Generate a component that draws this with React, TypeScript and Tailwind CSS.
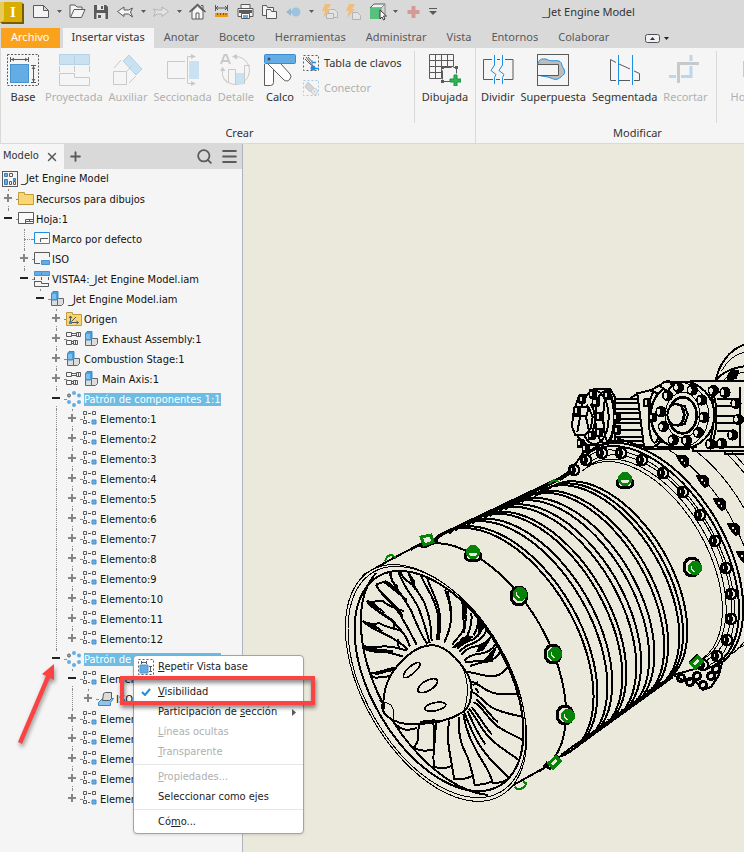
import React, { useState } from 'react';

import clsx from 'clsx';
import { Menu, Plus, Search, X } from 'lucide-react';

const INK = '#5a5a5a';
const PALE = '#c9c9c9';
const BLUE = '#64ade4';
const PALE_BLUE = '#c9e1f1';
const LINE_BLUE = '#1e8fe0';
const PAPER = '#ebe9db';
const GREEN = '#068306';

const Svg: React.FC<
  React.PropsWithChildren<{ w?: number; h?: number; className?: string }>
> = ({ w = 16, h = w, className, children }) => (
  <svg
    width={w}
    height={h}
    viewBox={`0 0 ${w} ${h}`}
    fill="none"
    aria-hidden="true"
    className={clsx('shrink-0', className)}
  >
    {children}
  </svg>
);

/* ---------- quick access bar ---------- */

const QUICK_ICONS: Record<string, React.ReactNode> = {
  Nuevo: <path d="M1.500 4.500h10l5 5v7h-15zM11.500 4.500v5h5" stroke={INK} fill="#f4f4f4" />,
  Abrir: (
    <>
      <path d="M2 16V4h5l2 2h5v3" stroke={INK} fill="#f4f4f4" />
      <path d="M2.500 16.500 6 8.500h11l-3.500 8z" stroke={INK} fill="#f4f4f4" />
    </>
  ),
  Guardar: (
    <>
      <path d="M2 4h12l2 2v12H2z" fill={INK} />
      <path d="M5 4h7v5H5zM4.500 12h9v6h-9z" fill="#e6e6e6" />
      <path d="M9 5h2v3H9zM6 14h3v3H6z" fill={INK} />
    </>
  ),
  Deshacer: (
    <path
      d="M1.500 10.500 8 6v3h4.500l4-2-2 4 2 5-4-3H8v2.500z"
      stroke={INK}
      fill="#f4f4f4"
    />
  ),
  Rehacer: (
    <path
      d="M16.500 10.500 10 6v3H5.500l-4-1 2 3.500-2 4 4-2.500H10v2.500z"
      stroke="#b5b5b5"
      fill="#e3e3e3"
    />
  ),
  Inicio: (
    <>
      <path d="M13 4.500h2v5" stroke={INK} />
      <path d="M4 10v8h11v-8L9.500 5z" stroke={INK} fill="#f7f7f7" />
      <path d="M1.500 11 9.500 3.500l8 7.500" stroke={INK} strokeWidth="1.500" />
      <path d="M8 18v-6h3v6" stroke={INK} />
    </>
  ),
  Medir: (
    <>
      <path d="M3.500 4v6M15.500 4v6M4 7h11M6 5 4 7l2 2M13 5l2 2-2 2" stroke={INK} />
      <path d="M3 12h13v4H3z" fill="#ee9a12" />
      <path d="M5.500 12v2M8.500 12v2M11.500 12v2M14 12v2" stroke="#7b5317" />
    </>
  ),
  Imprimir: (
    <>
      <path d="M5 3.500h9v4H5zM2 7.500h15v8H2z" stroke={INK} fill="#f4f4f4" />
      <path d="M3 9h13v3H3z" fill={INK} />
      <path d="M5.500 12.500h8v5h-8z" stroke={INK} fill="#fff" />
      <path d="M7 14h5v3H7z" fill={BLUE} />
    </>
  ),
  Proyectos: (
    <>
      <path d="M2.500 4.500h4l1 2h6v8h-11z" stroke={INK} fill="#f4f4f4" />
      <path d="M6.500 8.500h4l1 2h5v7h-10z" stroke={INK} fill="#f4f4f4" />
    </>
  ),
  Volver: (
    <>
      <path d="M2 11l5-4v3h4v2H7v3z" fill="#9ab8d0" />
      <circle cx="12" cy="11" r="4.500" fill="#9cc3e0" />
    </>
  ),
  'Actualizar todo': (
    <>
      <path d="M8.500 8.500h6l3 3v5h-9z" stroke="#b3b3b3" fill="#e2e2e2" />
      <path d="M6.500 12.500h7v5h-7z" stroke="#b3b3b3" fill="#e2e2e2" />
      <path d="M5 3h6L8 8h3l-8 9 2-7H2z" fill="#f0bd7c" />
    </>
  ),
  Actualizar: (
    <>
      <path d="M8.500 11.500h5l3 3v4h-8z" stroke="#b3b3b3" fill="#e2e2e2" />
      <path d="M5 3h6L8 8h3l-8 9 2-7H2z" fill="#f0bd7c" />
    </>
  ),
  Seleccionar: (
    <>
      <path d="m2 7 4-4h11l-4 4z" fill="#f1f1f1" stroke={INK} />
      <path d="m13 7 4-4v10l-4 4z" fill="#d5d5d5" stroke="#8c8c8c" />
      <path d="M2 7h11v11H2z" fill="#56c07c" />
      <path d="M12 9v9l2-2 1.500 3 1.500-1-1.500-3h3z" fill="#fff" stroke="#333" />
    </>
  ),
  Añadir: <path d="M7.500 5h4v4h4v4h-4v4h-4v-4h-4V9h4z" fill="#d49a98" />,
};

const QUICK_BAR = [
  'Nuevo', 'caret', 'Abrir', 'Guardar', 'Deshacer', 'caret', 'Rehacer',
  'caret', 'Inicio', 'Medir', 'Imprimir', 'Proyectos', 'Volver', 'caret',
  'Actualizar todo', 'Actualizar', 'Seleccionar', 'caret', 'Añadir',
];

const TitleBar: React.FC = () => (
  <header className="flex h-7 items-start bg-[#d9d9d9]">
    <div className="mr-1 w-[25px] shrink-0">
      <Svg w={25} h={25}>
        <path d="M0 2h22v20H0z" fill="#d9ac00" />
        <path d="M0 2h4v18l-4 3z" fill="#e8ca59" />
        <path d="M22 3l2 1v20H2l-2-2h22z" fill="#7a5c00" />
        <text
          x="13" y="17" textAnchor="middle" fill="#fff"
          fontFamily="Liberation Serif" fontWeight="bold" fontSize="15"
        >
          I
        </text>
      </Svg>
    </div>
    {QUICK_BAR.map((name, i) =>
      name === 'caret' ? (
        <button key={i} aria-label="Más" className="flex h-[22px] w-3 shrink-0 items-center justify-center">
          <Svg w={5} h={3}>
            <path d="M0 0h5L2.500 3z" fill={INK} />
          </Svg>
        </button>
      ) : (
        <button key={i} aria-label={name} className="flex h-[22px] w-6 shrink-0 items-center justify-center">
          <Svg w={19} h={20}>{QUICK_ICONS[name]}</Svg>
        </button>
      )
    )}
    <button aria-label="Personalizar" className="flex h-[22px] w-4 shrink-0 items-center justify-center">
      <Svg w={8} h={7}>
        <path d="M0 0h8v1H0zM0 3h8L4 7z" fill={INK} />
      </Svg>
    </button>
    <h1 className="flex-1 truncate pr-2 text-center leading-6 text-[#333]">_Jet Engine Model</h1>
  </header>
);

/* ---------- ribbon ---------- */

const TABS = [
  'Anotar', 'Boceto', 'Herramientas', 'Administrar', 'Vista', 'Entornos', 'Colaborar',
];

const Tabs: React.FC = () => (
  <nav className="flex h-5 items-stretch bg-[#d9d9d9] pl-px leading-4 text-[#5a5a5a]">
    <button className="mr-[3px] bg-[#faa21b] px-[10px] pb-0.5 text-white">Archivo</button>
    <button className="bg-[#f5f5f5] px-[9px] pb-0.5 text-[#333]" aria-current="page">
      Insertar vistas
    </button>
    {TABS.map((tab) => (
      <button key={tab} className="px-[10px] pb-0.5">
        {tab}
      </button>
    ))}
    <button className="ml-[26px] flex items-center gap-1" aria-label="Minimizar cinta">
      <Svg w={15} h={9}>
        <rect x=".5" y=".5" width="14" height="8" rx="2" stroke="#4b4f58" fill="#f0f0f0" />
        <path d="M5 6h5L7.500 3z" fill="#333" />
      </Svg>
      <Svg w={5} h={3}>
        <path d="M0 0h5L2.500 3z" fill="#222" />
      </Svg>
    </button>
  </nav>
);

const BASE_DRAWING = (
  <>
    <rect x=".5" y=".5" width="31" height="31" stroke={INK} strokeDasharray="2 1.500" />
    <rect x="3.500" y="10.500" width="18" height="18" fill={BLUE} stroke="#4a93cf" />
    <path
      d="M3.500 3v5M21.500 3v5M4 5.500h17M7 4 5 5.500 7 7M18 4l2 1.500L18 7M24 11.500h5M24 28.500h5M26.500 12v16M25 15l1.500-2 1.500 2M25 25l1.500 2 1.500-2"
      stroke={INK}
    />
  </>
);

const RIBBON_ICONS: Record<string, React.ReactNode> = {
  Base: BASE_DRAWING,
  Proyectada: (
    <>
      <path d="M1.500.5h30v10h-30zM16.500.5v10" fill={PALE_BLUE} stroke="#b5d3e8" />
      <path d="M1.500 12v6M16.500 12v6M31.500 12v6M1.500 19.500h15v4h15v8h-30z" stroke={PALE} />
    </>
  ),
  Auxiliar: (
    <>
      <path d="m17 1 13 14-6 6L11 7z" fill={PALE_BLUE} stroke="#b5d3e8" />
      <path d="M1.500 17.500h13v13h-13zM2 14l7-8M17 29l7-7M15 17l5-5" stroke={PALE} />
    </>
  ),
  Seccionada: (
    <>
      <path d="M18 7.500H.5v17H18M20.500 29V2.500H26M20.500 29.500H26" stroke={PALE} />
      <path d="M24 0l5 2.500L24 5zM24 27l5 2.500-5 2.500z" fill={PALE} />
      <path d="M22 7h10v18H22z" fill={PALE_BLUE} />
    </>
  ),
  Detalle: (
    <>
      <path d="M1 10 4.500 1h2L10 10M2.500 7h6" stroke={PALE} strokeWidth="2" />
      <path d="M16 2.500a14 14 0 1 1-12 22M2.500 14v7a13 13 0 0 0 5 8" stroke={PALE} />
      <path d="M0 17l2.500-4 3 4zM17 0l-5 2.500 5 3z" fill={PALE} />
      <path d="M16 19h8v11c-3 1-5 1-8 0z" fill={PALE_BLUE} />
      <path d="M8.500 28V15.500h7V30M24.500 30V11.500H30" stroke={PALE} />
    </>
  ),
  Calco: (
    <>
      <path d="M.5 10v21.500h6a3 3 0 0 0 3-3V12" stroke={INK} fill="#fff" />
      <path d="M4 10 20 26a4 4 0 0 0 6-1 4 4 0 0 0 0-5L17 10" stroke={INK} fill="#fff" />
      <rect x=".5" y=".5" width="31" height="9" rx="1" fill={BLUE} stroke="#3c8ad0" />
      <circle cx="5" cy="5" r="1.500" fill="#35506a" />
    </>
  ),
  Dibujada: (
    <>
      <path d="M.5.500h24v12M.5.5v24h12M.5 6.500h24M.5 12.500h24M.5 18.500h12M6.500.5v24M12.500.5v24M18.500.5v12" stroke={INK} />
      <path d="M13.500 13.500h14v14h-14z" stroke={INK} fill="#f5f5f5" strokeDasharray="9 2" />
      <path d="M12 12h3v3h-3zM26 12h3v3h-3zM12 26h3v3h-3z" fill={INK} />
      <path d="M25 21h3v4h4v3h-4v4h-3v-4h-4v-3h4z" fill="#2fb457" stroke="#1b9341" />
    </>
  ),
  Dividir: (
    <>
      <path d="M10 5.500H1.500v20H11M15 5.500h3M14 25.500h4M23 5.500h8v20h-9" stroke={INK} />
      <path d="M12.500 1v10l-3.500 5.500 5 4-1.500 3V30M20.500 1v10L17 16.500l5 4-1.500 3V30" stroke={LINE_BLUE} />
    </>
  ),
  Superpuesta: (
    <>
      <rect x=".5" y=".5" width="31" height="31" stroke={INK} />
      <path
        d="M1 9c2-5 5-4 8-4 5 3 9 1 13 2 4 2 2 5 5 8 2 5-1 6-3 8-4 3-6 3-10 1-4-2-8-1-13-3V21h20V11H1z"
        fill="#bdbdbd" stroke={LINE_BLUE}
      />
      <path d="M1 10.500h20.500v11H1" stroke={INK} fill="#f5f5f5" />
    </>
  ),
  Segmentada: (
    <>
      <path d="M7 8.500 1.500 5.500v21H7M10 10l11 5M10 26.500h11M25 17l5.500 2.500v7H25" stroke={INK} />
      <path d="M9.500 1v30M23.500 1v30" stroke={LINE_BLUE} />
    </>
  ),
  Recortar: (
    <>
      <path d="M9.500 29V9.500H30" stroke="#c9c9c9" strokeWidth="3" />
      <path d="M0 22.500h7M12 22.500h10V12M22 1v6" stroke="#b9d8ee" strokeWidth="3" />
    </>
  ),
  Horizontal: <path d="M2 7h12v16H2zM18 7h12v16H18z" fill="#c9c9c9" />,
};

const RibbonButton: React.FC<{ name: string; disabled?: boolean }> = ({ name, disabled }) => (
  <button
    disabled={disabled}
    className={clsx(
      'flex min-w-[38px] shrink-0 flex-col items-center gap-[3px] px-[3px] leading-4',
      disabled ? 'text-[#b0b0b0]' : 'text-[#333]'
    )}
  >
    <Svg w={32}>{RIBBON_ICONS[name]}</Svg>
    {name}
  </button>
);

const RibbonGroup: React.FC<
  React.PropsWithChildren<{ title: string; className?: string }>
> = ({ title, className, children }) => (
  <section className={clsx('flex shrink-0 flex-col justify-between border-r border-[#d9d9d9] pb-px', className)}>
    <div className="flex h-[74px] items-start pt-1.5">{children}</div>
    <h2 className="text-center leading-[19px] text-[#333]">{title}</h2>
  </section>
);

const Divider = () => <div className="h-[72px] w-px shrink-0 -mt-[3px] bg-[#d9d9d9]" />;

const Ribbon: React.FC = () => (
  <div className="flex h-24 overflow-hidden border-b border-l border-[#d9d9d9] bg-[#f5f5f5]">
    <RibbonGroup title="Crear" className="w-[475px] pl-[3px]">
      <RibbonButton name="Base" />
      <RibbonButton name="Proyectada" disabled />
      <RibbonButton name="Auxiliar" disabled />
      <RibbonButton name="Seccionada" disabled />
      <RibbonButton name="Detalle" disabled />
      <div className="ml-1 flex">
        <RibbonButton name="Calco" />
      </div>
      <div className="flex flex-1 flex-col gap-1 pl-1">
        <button className="flex h-[18px] items-center gap-[5px] whitespace-nowrap text-[#333]">
          <Svg>
            <rect x=".5" y=".5" width="15" height="15" stroke={INK} strokeDasharray="2" />
            <path d="m2 4 5 5M5 2l5 6M3 2l7 9M7 9l3 2" stroke={INK} />
            <path d="M9 5v6" stroke="#d06ad0" />
            <circle cx="10" cy="13" r="2.500" fill={LINE_BLUE} />
            <path d="M9 7.500h4M12 13.500h4" stroke={LINE_BLUE} strokeWidth="1.500" />
          </Svg>
          Tabla de clavos
        </button>
        <button disabled className="flex h-6 items-center gap-[5px] text-[#b0b0b0]">
          <Svg>
            <rect x=".5" y=".5" width="15" height="15" stroke="#a9cde8" strokeDasharray="2" />
            <path d="m5 2 6 6-4 4-5-5z" fill="#d5d5d5" stroke={PALE} />
            <circle cx="11.500" cy="11.500" r="3" fill="#eee" stroke={PALE} />
            <circle cx="11.500" cy="11.500" r="1" fill={PALE} />
          </Svg>
          Conector
        </button>
      </div>
      <Divider />
      <div className="flex w-[60px] justify-center">
        <RibbonButton name="Dibujada" />
      </div>
    </RibbonGroup>
    <RibbonGroup title="Modificar" className="w-[322px] pl-0.5">
      <RibbonButton name="Dividir" />
      <RibbonButton name="Superpuesta" />
      <RibbonButton name="Segmentada" />
      <RibbonButton name="Recortar" disabled />
      <div className="w-[5px] shrink-0" />
      <Divider />
      <div className="ml-[11px] flex">
        <RibbonButton name="Horizontal" disabled />
      </div>
    </RibbonGroup>
  </div>
);

/* ---------- model browser ---------- */

type IconName =
  | 'drawing' | 'folder' | 'sheet' | 'border' | 'view' | 'projected'
  | 'assembly' | 'origin' | 'fastened' | 'pattern' | 'element' | 'part';

interface TreeNode {
  label: string;
  icon: IconName;
  leaf?: boolean;
  selected?: boolean;
  children?: TreeNode[];
}

const ASSEMBLY = (
  <>
    <path d="M1.500 8.500h6v6h-6zM7.500 14.500v-6l1-1h5v5l-2 2z" fill="#dcdcdc" stroke="#666" />
    <path d="M1.500 2.500 3 .5h5v7l-1.500 1.500h-5z" fill="#4b9fdc" stroke="#3a87c2" />
    <path d="M2 3h4v5H2z" fill="#7cbfeb" />
  </>
);

const TREE_ICONS: Record<IconName, React.ReactNode> = {
  drawing: (
    <>
      <rect x=".5" y=".5" width="15" height="15" stroke={INK} />
      <path d="M2.500 2.500h3v3h-3z" fill={BLUE} stroke="#3d7db3" />
      <path d="M7.500 2.500h3v3h-3zM7.500 10.500h2v3h-2zM11.500 10.500h2v3h-2z" stroke={INK} />
      <path d="M2.500 8.500h3v5h-3zM11.500 7.500h2v2h-2z" fill={BLUE} stroke="#3d7db3" />
    </>
  ),
  folder: <path d="M.5 3.500v-2h6v2h9v10H.5z" fill="#f7d774" stroke="#c39b3a" />,
  sheet: (
    <>
      <path d="M.5 1.500h15v11H.5z" fill="#fafafa" stroke={INK} />
      <path d="M7.500 12V8.500H15M7.500 10.500H15M11.500 8.500v2" stroke={INK} />
    </>
  ),
  border: (
    <>
      <path d="M.5 1.500h15v11H.5z" fill="#fafafa" stroke={LINE_BLUE} />
      <path d="M6.500 11V7.500H14" stroke={INK} />
    </>
  ),
  view: (
    <>
      <path d="M6 12.500H.5v-11h15V6" stroke={INK} />
      <path d="M7.500 9.500h8v4h-8z" fill={BLUE} stroke="#4a93cf" />
    </>
  ),
  projected: (
    <>
      <path d="M.5.5h15v4H.5zM7.500.5v4" fill={BLUE} stroke="#4a93cf" />
      <path d="M.5 6v3M7.500 6v3M14.500 6v3M0 10.500h7.500v2h7.500M.5 10.500v5h14v-3" stroke={INK} />
    </>
  ),
  assembly: ASSEMBLY,
  origin: (
    <>
      <path d="M.5 3.500v-2h6v2h9v11H.5z" fill="#f7d774" stroke="#c39b3a" />
      <path d="M4.500 12V5M3 7l1.500-2L6 7M5 11.500h7M10.500 10l2 1.500-2 1.500M5 11l5-5" stroke="#555" />
      <path d="M3 10h3v3H3z" fill={LINE_BLUE} />
    </>
  ),
  fastened: (
    <>
      <path d="M.5 1.500h5v4h-5zM5.500 2.500h5v2h-5zM10.500 1.500h4v4h-4zM12.500 1.500v4" stroke={INK} />
      <path d="M.5 9.500h5v4h-5zM5.500 10.500h2v2h-2zM7.500 9.500h4v4h-4zM9.500 9.500v4" stroke={INK} />
    </>
  ),
  pattern: (
    <>
      <circle cx="3" cy="4.500" r="1.500" stroke={INK} fill="#aaa" />
      <circle cx="8" cy="2" r="2" fill={BLUE} />
      <circle cx="13" cy="4.500" r="2" fill={BLUE} />
      <circle cx="13" cy="11" r="2" fill={BLUE} />
      <circle cx="8" cy="14" r="2" fill={BLUE} />
      <circle cx="3" cy="11" r="2" fill={BLUE} />
    </>
  ),
  element: (
    <>
      <path d="M1.500.5h3v3h-3zM10.500.5h3v3h-3zM1.500 9.500h3v3h-3z" stroke={INK} />
      <path d="M6 2.500h3M2.500 5v3M6 11.500h2" stroke={INK} />
      <path d="M10 9h4v4h-4z" fill={BLUE} stroke="#4a93cf" />
    </>
  ),
  part: (
    <>
      <path d="m.5 11.500 4-4h11l-3 4v3H.5z" fill="#8cc6ee" stroke="#3a87c2" />
      <path d="m4.500 9.500 1-7 2-1h6v6l-2 2z" fill="#dcdcdc" stroke={INK} />
    </>
  ),
};

const elements = (from: number, to: number): TreeNode[] =>
  Array.from({ length: to - from + 1 }, (_, i) => ({
    label: `Elemento:${from + i}`,
    icon: 'element',
  }));

const TREE: TreeNode[] = [
  { label: 'Recursos para dibujos', icon: 'folder' },
  {
    label: 'Hoja:1',
    icon: 'sheet',
    children: [
      { label: 'Marco por defecto', icon: 'border', leaf: true },
      { label: 'ISO', icon: 'view' },
      {
        label: 'VISTA4:_Jet Engine Model.iam',
        icon: 'projected',
        children: [
          {
            label: '_Jet Engine Model.iam',
            icon: 'assembly',
            children: [
              { label: 'Origen', icon: 'origin' },
              { label: 'Exhaust Assembly:1', icon: 'fastened' },
              { label: 'Combustion Stage:1', icon: 'assembly' },
              { label: 'Main Axis:1', icon: 'fastened' },
              {
                label: 'Patrón de componentes 1:1',
                icon: 'pattern',
                selected: true,
                children: elements(1, 12),
              },
              {
                label: 'Patrón de componentes 2:1',
                icon: 'pattern',
                selected: true,
                children: [
                  {
                    label: 'Elemento:1',
                    icon: 'element',
                    children: [{ label: 'ISO', icon: 'part' }],
                  },
                  ...elements(2, 6),
                ],
              },
            ],
          },
        ],
      },
    ],
  },
];

const Branch: React.FC<{ node: TreeNode; last: boolean; guides: boolean[] }> = ({
  node,
  last,
  guides,
}) => {
  const [open, setOpen] = useState(!!node.children);

  return (
    <li>
      <div className="flex h-5 items-center">
        {guides.map((line, i) => (
          <span
            key={i}
            className={clsx('ml-2 h-5 w-2 shrink-0', line && 'border-l border-dotted border-[#8c8c8c]')}
          />
        ))}
        <span className="grid h-5 w-[18px] shrink-0 grid-cols-[16px_2px] items-center">
          <span className="col-start-1 row-start-1 flex h-5 flex-col pl-2">
            <span className="h-[10px] border-l border-dotted border-[#8c8c8c]" />
            {!last && <span className="h-[10px] border-l border-dotted border-[#8c8c8c]" />}
          </span>
          {node.leaf ? (
            <span className="col-start-1 row-start-1 ml-2 border-t border-dotted border-[#8c8c8c]" />
          ) : (
            <button
              aria-label={node.label}
              aria-expanded={open}
              onClick={() => setOpen(!open)}
              className="col-start-1 row-start-1 ml-[3px] h-[14px] w-[11px] bg-[#f5f5f5]"
            >
              <Svg w={11} h={14}>
                {open ? (
                  <path d="M1 5h8v2H1z" fill="#222" />
                ) : (
                  <path d="M4 2h2v3h3v2H6v3H4V7H1V5h3z" fill="#858585" />
                )}
              </Svg>
            </button>
          )}
          <span className="col-start-2 row-start-1 border-t border-dotted border-[#8c8c8c]" />
        </span>
        <Svg>{TREE_ICONS[node.icon]}</Svg>
        {node.icon === 'fastened' && <Svg className="ml-0.5">{ASSEMBLY}</Svg>}
        <span
          className={clsx(
            'ml-0.5 whitespace-nowrap leading-[13px]',
            node.selected && 'bg-[#6cbce4] text-white'
          )}
        >
          {node.label}
        </span>
      </div>
      {open && node.children && <Branches nodes={node.children} guides={[...guides, !last]} />}
    </li>
  );
};

const Branches: React.FC<{ nodes: TreeNode[]; guides: boolean[] }> = ({ nodes, guides }) => (
  <ul>
    {nodes.map((node, i) => (
      <Branch key={node.label} node={node} last={i === nodes.length - 1} guides={guides} />
    ))}
  </ul>
);

const ModelBrowser: React.FC = () => (
  <aside className="w-[243px] shrink-0 border-r border-[#aeb3bd] bg-[#f5f5f5] font-['DejaVu_Sans_Condensed','DejaVu_Sans',sans-serif] text-[11px] text-[#111]">
    <div className="flex h-[25px] items-center bg-[#d9d9d9] text-[#5a5a5a]">
      <div className="flex h-full w-16 items-center justify-between bg-[#f5f5f5] pl-[3px] pr-[5px] text-[#333]">
        Modelo
        <button aria-label="Cerrar">
          <X size={14} strokeWidth={2.5} color={INK} />
        </button>
      </div>
      <button aria-label="Añadir panel" className="ml-1">
        <Plus size={15} strokeWidth={3} />
      </button>
      <button aria-label="Buscar" className="ml-auto mr-[7px]">
        <Search size={17} strokeWidth={2.5} />
      </button>
      <button aria-label="Menú" className="mr-[3px]">
        <Menu size={19} strokeWidth={2.5} />
      </button>
    </div>
    <div className="flex h-5 items-center gap-[3px] pl-0.5">
      <Svg>{TREE_ICONS.drawing}</Svg>
      _Jet Engine Model
    </div>
    <Branches nodes={TREE} guides={[]} />
  </aside>
);

/* ---------- engine view ---------- */

// Half ring of the casing: t runs along the engine axis, s is the radius ratio.
const ring = (t: number, s: number, extra = 7) => {
  const cx = 436 + 0.87 * t;
  const cy = 683 - 0.5 * t;
  const rx = 130 * s;
  const ry = 73.5 * s;
  const at = (deg: number) => {
    const a = (deg * Math.PI) / 180;
    const p = rx * Math.cos(a);
    const q = ry * Math.sin(a);
    return `${(cx + 0.5 * p + 0.866 * q).toFixed(1)} ${(cy + 0.866 * p - 0.5 * q).toFixed(1)}`;
  };
  return `M${at(180 + extra)}A${rx} ${ry} 60 1 1 ${at(-extra)}`;
};

const RIB_EDGES = [593, 597, 607, 612, 622, 626, 636, 641, 649, 654, 664, 668, 679, 683, 687];

const RIBS = RIB_EDGES.map((x) => {
  const t = 83 + (x - 596) / 0.79;
  return ring(t, 0.97 - (t - 83) * 0.0009, 9);
}).join('');

const FLANGE_BOLTS = [
  [574, 470], [586, 460], [602, 453], [621, 453], [642, 460], [663, 473], [683, 492],
  [700, 515], [715, 541], [726, 568], [731, 594], [731, 619], [727, 640], [717, 656], [703, 665],
];

const REAR_BOLTS = [[682, 461], [702, 481], [719, 504], [733, 529], [742, 557]];

const BOSSES = [[473, 552, 0, 4], [520, 594, -1, 2], [555, 654, -2, 0], [568, 716, -3, -1], [625, 479, 0, 4], [695, 568, -3, -1]];

const WHEEL_BOLTS = [
  [383, 197], [415, 172], [457, 180], [485, 210], [492, 262], [475, 308],
  [440, 332], [400, 330], [370, 290], [363, 245], [520, 182], [555, 187],
  [588, 220], [595, 268], [578, 315], [545, 340], [512, 342],
];

const CAP_BOLTS = [[127, 207], [158, 192], [112, 242], [168, 216], [178, 260], [178, 308], [155, 316], [122, 340], [137, 355], [202, 195], [230, 262], [232, 300], [322, 218], [338, 262]];

const Pump: React.FC = () => (
  <g transform="translate(540 330) scale(.33333)" strokeWidth="6" fill={PAPER}>
    <path d="M526 158c8-52 40-100 92-116v140z" />
    <path d="M545 122c18-30 40-50 75-57M545 158c18-22 40-30 75-30" fill="none" strokeWidth="3" />
    <path d="M526 152c20-24 50-40 94-44" fill="none" />
    <path d="M565 150c-4-22 12-34 30-26l-8 20z" fill="#000" />
    <path d="M225 208h125v125H225zM460 153h160v210H460z" />
    <path d="M225 220h100M225 238h105M225 250h105M235 266h100M225 280h110M230 300h105M225 322h115M270 205l20-12h30" fill="none" />
    <path d="M225 332h125l100 24H190z" />
    <path d="M230 325l70 22 60-16M262 330l30 20 60-2" fill="none" />
    <path d="M118 196h26l18-18h50l14 26v126l-30 14h-55l-26-22-10-90z" />
    <ellipse cx="164" cy="262" rx="42" ry="80" />
    <ellipse cx="194" cy="262" rx="28" ry="78" fill="none" />
    <ellipse cx="206" cy="262" rx="16" ry="74" fill="none" />
    <path d="M140 225c16 14 20 60 6 80M152 222c14 20 18 60 4 84" fill="none" />
    <path d="M100 250l14-20h30l14 30-6 36-18 20h-28l-10-26zM114 232l6 30-8 44M146 232l-8 30 10 44M100 258h40" />
    <path d="M292 190l40-10 20 10 14 60-8 90-20 12h-26z" />
    <ellipse cx="344" cy="262" rx="18" ry="76" fill="none" />
    <path d="M330 182l50-28 70 4" fill="none" />
    <ellipse cx="428" cy="255" rx="95" ry="100" />
    <ellipse cx="418" cy="255" rx="88" ry="98" fill="none" strokeWidth="3" />
    <ellipse cx="428" cy="255" rx="52" ry="68" fill="none" strokeWidth="3" />
    <ellipse cx="428" cy="256" rx="42" ry="54" strokeWidth="8" />
    <ellipse cx="408" cy="254" rx="26" ry="32" />
    <path d="M412 224l22 4 10 26-10 28-22 6M424 228l8 26-8 32" fill="none" />
    <path d="M505 172c22 40 24 130-4 175M516 178c18 44 18 120 0 162" fill="none" />
    <path d="M530 208h55M530 228h62M530 258h55M530 280h60M530 302h50" fill="none" />
    <path d="M350 352h120M500 350h112M555 362h60v10h-60z" fill="none" />
    <path d="M360 168c10-18 34-16 36 0l-14 16zM600 170v180M450 152h90" />
    {CAP_BOLTS.map(([x, y]) => (
      <g key={`${x}-${y}`}>
        <rect x={x - 12} y={y - 14} width="24" height="28" rx="4" fill="#000" stroke="none" />
        <rect x={x - 8} y={y - 7} width="7" height="13" stroke="none" />
      </g>
    ))}
    {WHEEL_BOLTS.map(([x, y]) => (
      <g key={`${x}-${y}`}>
        <circle cx={x} cy={y} r="17" fill="#000" stroke="none" />
        <ellipse cx={x - 7} cy={y} rx="5" ry="9" stroke="none" />
      </g>
    ))}
  </g>
);

const Fan: React.FC = () => (
  <g transform="translate(330 540) scale(.33333)" strokeWidth="6">
    {/* upper blades */}
    <path d="M178 98c12 50 58 86 72 130 14 34 26 62 42 84M205 93c14 50 50 80 64 120 14 36 22 66 30 96M235 93c8 44 36 66 50 100 16 40 18 72 20 110M182 98c0 26 10 36 22 42M210 95c8 22 22 28 38 40M272 104c16 42 38 60 50 112 8 32 2 52-2 84M290 110c14 44 28 60 36 96 10 36 4 60 0 94M345 148c14 34 18 60 18 90-2 30-10 44-20 70M352 152c10 40 14 60 12 90M395 178c8 30 2 54 8 80-2 26-24 34-36 56M405 190c2 40 4 60-4 88M424 218c4 26-4 50-12 70-12 14-34 22-42 36M445 232c0 20-6 40-14 54M460 250c-6 20-14 40-30 48-18 6-34 14-48 28M470 268c-8 24-24 36-46 44-14 4-26 12-36 24M484 290c-12 16-26 26-50 30-20 2-30 12-40 24M498 312c-14 22-30 26-54 30-18 2-30 8-42 20" />
    <path d="M236 96l10 40 10 14-4-30zM398 184l8 60 4-44zM448 240l-4 50 22-34zM480 300l-20 30-20 6 10-20zM500 320l-14 34-26 10 20-24zM430 290l-30 22-26 10 24-30z" fill="#000" strokeWidth="3" />
    {/* left blades */}
    <path d="M138 134l28-10c20 6 28 28 48 38M138 134c18 40 66 66 80 104 18 28 28 50 42 76M145 150c26 24 60 50 74 80M165 128c26 20 42 34 66 52M110 182c18 10 34-4 50 2 22 20 40 20 62 30M110 182c14 28 66 46 84 70 26 22 36 40 46 68M120 196c24 20 60 34 76 54M98 243c18 22 70 38 90 52 24 14 34 20 44 34M98 243c22 18 36 4 54 8 22 14 40 12 62 22M98 318c34 8 68-4 94 4 18 4 28 6 40 10M98 320c16 22 64 12 88 20l34 10M104 328c30 4 56 0 86 6M120 400c30 0 52-16 84-18M120 400c6 20 26 12 62 8M136 404c20-6 36-12 56-14M194 250l-4 16M204 296l2 28" />
    <path d="M98 243l20 14 40 16-30-22zM110 182l24 20 30 16-34-30zM98 318l14 10 50 4-40-10z" fill="#000" strokeWidth="3" />
    {/* right blades */}
    <path d="M404 366c30-4 56 2 84-8 16-8 18-14 22-24M410 396c34 2 60 20 92 10 14-4 20-12 30-22M420 378c30-10 50-16 70-14M424 424c30 10 44 36 84 38l52 0M428 436l16-10M426 456c24 8 38 38 70 52 26 10 50 16 80 22M436 444l10 14M430 486c26 10 40 48 74 74 26 18 56 28 76 42M438 478c30 24 46 56 66 68M416 506c24 26 36 60 60 84 30 34 64 48 90 70M424 500c24 28 40 60 62 84M402 516c16 36 26 72 54 110 26 38 56 62 78 86M412 512c16 34 30 70 54 100" />
    {/* lower blades */}
    <path d="M266 556c-2 26 4 46-14 66 14 12 40 12 60 6M310 550c8 40-4 88 2 130 22 8 44 4 56-4M318 550c-2 20-2 40-4 60M358 542c-12 60 4 100 14 174 20 4 40 0 56-8M386 530c-2 60 10 90 26 120 10 28 18 60 22 84 20 2 40-4 52-10M400 522c10 60 28 90 50 130 20 30 34 60 38 76 22 2 42-6 52-16" />
    <path d="M194 550c10 12 24 18 38 20l30-6" />
    {/* spinner */}
    <path
      d="M160 486c4-60 24-96 76-142 24-20 48-30 76-28 40 6 76 46 102 88 12 28 14 60 4 86-8 22-20 28-54 44-40 14-90 20-134 18-30-4-52-12-68-34-8-14-8-22-2-32z"
      fill={PAPER}
    />
    <path d="M318 316c60 16 92 70 94 130 0 26-2 44-10 62M160 488c24-2 38 20 28 52" strokeWidth="3" />
    <path d="M270 548c20-6 40-6 60-4M150 478l10 10v20" strokeWidth="9" />
    <ellipse cx="245" cy="390" rx="32" ry="11" transform="rotate(-42 245 390)" strokeWidth="5" />
    <ellipse cx="293" cy="437" rx="33" ry="15" transform="rotate(-30 293 437)" strokeWidth="5" />
    <ellipse cx="316" cy="500" rx="32" ry="12" transform="rotate(-12 316 500)" strokeWidth="5" />
  </g>
);

const EngineView: React.FC = () => (
  <svg
    viewBox="243 144 501 708"
    width="501"
    height="708"
    fill="none"
    stroke="#000"
    strokeWidth="2"
    shapeRendering="crispEdges"
    role="img"
    aria-label="Vista isométrica del motor"
  >
    {/* rear casing */}
    <path
      strokeWidth="1"
      d={ring(268, 0.94) + ring(285, 0.93) + ring(305, 0.92) + ring(310, 0.92) + ring(325, 0.92) + ring(330, 0.92)}
    />
    <Pump />
    <path d="M673 675l12 6 8-2 10 11 8-3 8-12 3-12-20 4z" fill={PAPER} />
    {[[681, 678], [690, 682], [697, 676], [703, 685], [711, 676], [716, 669]].map(([x, y]) => (
      <circle key={x} cx={x} cy={y} r="3.500" strokeWidth="3" />
    ))}

    {/* flange */}
    <path d={ring(253, 0.96)} fill={PAPER} />
    <path d="M569 474l-9 6 16-17 7-10M540 490l35-22" />
    <path d={ring(249, 0.95)} />
    <path
      strokeWidth="1"
      d={ring(246, 0.93) + ring(243, 0.865) + ring(239, 0.86) + ring(247, 0.885)}
    />
    {REAR_BOLTS.map(([x, y]) => (
      <g key={x}>
        <path d={`M${x - 5} ${y - 5}h8l3 3v6l-3 2-4-4z`} fill="#000" />
        <path d={`M${x - 1} ${y - 2}h2v2h-2zM${x + 2} ${y + 1}h1v2h-1z`} fill={PAPER} stroke="none" />
      </g>
    ))}
    {FLANGE_BOLTS.map(([x, y]) => (
      <g key={`${x}-${y}`} strokeWidth="1">
        <circle cx={x} cy={y} r="6" fill="#000" />
        <path d={`M${x + 1} ${y - 4}q5 4 0 8q3-4 0-8z`} fill={PAPER} stroke={PAPER} />
        <path d={`M${x - 3} ${y - 2}v3`} stroke={PAPER} />
      </g>
    ))}

    {/* ribbed casing and cowl */}
    <path d={RIBS} />
    <path d={ring(47, 0.985, 2)} />
    <path d="M362 576 388 561 426 541M435 538l122-57M437 536l120-57M492 797l52-29 14-12M561 755l112-80M565 755l108-78" />

    {/* intake */}
    <ellipse cx="436" cy="683" rx="130" ry="73" transform="rotate(60 436 683)" fill={PAPER} strokeWidth="1" />
    <path d="M376 573a130 73 60 0 0 112 222" />
    <ellipse cx="437" cy="682" rx="127" ry="72" transform="rotate(60 437 682)" strokeWidth="1" />
    <ellipse cx="439" cy="681" rx="121" ry="68" transform="rotate(60 439 681)" />
    <Fan />

    {/* highlighted screws */}
    {BOSSES.map(([x, y, dx, dy]) => (
      <g key={x}>
        <ellipse cx={x + dx} cy={y + dy} rx="8" ry={dy > 2 ? 5 : 9} fill={PAPER} strokeWidth="3" />
        <ellipse cx={x + dx} cy={y + dy} rx="6" ry={dy > 2 ? 3 : 6} stroke={PAPER} strokeWidth="1" />
        <circle cx={x} cy={y} r="6" fill={GREEN} stroke={GREEN} />
        {dy > 2 ? (
          <path d={`M${x - 4} ${y + 1}h8v2l-2 1h-4l-2-1z`} fill={PAPER} stroke="none" />
        ) : (
          <path d={`M${x - 4} ${y - 2}q0 4 4 6`} stroke={PAPER} strokeWidth="1" />
        )}
      </g>
    ))}
    <path d="M418 545l6 2 12-5v-3M548 762l-3 4 6 3M690 663l8-8" strokeWidth="3" />
    <g stroke={GREEN} strokeWidth="3" fill={PAPER}>
      <path d="M421 537l10-2 2 7-9 3zM549 763l7-6 4 4-7 7zM691 663l7-6 4 4-7 7z" />
      <path d="M385 561q2-6 7-6l4 3M549 484q4-6 10-2M515 787l2 2q9 0 9-6l-3-1" fill="none" strokeWidth="2" />
    </g>
  </svg>
);

/* ---------- context menu and callouts ---------- */

const MenuItem: React.FC<
  React.PropsWithChildren<{ icon?: React.ReactNode; disabled?: boolean; submenu?: boolean }>
> = ({ icon, disabled, submenu, children }) => (
  <button
    role="menuitem"
    disabled={disabled}
    className={clsx(
      'flex h-5 w-full items-center text-left',
      disabled ? 'text-[#b0b0b0]' : 'text-[#222]'
    )}
  >
    <span className="flex w-6 shrink-0 justify-center">{icon}</span>
    <span>{children}</span>
    {submenu && (
      <Svg w={4} h={7} className="ml-auto mr-[7px]">
        <path d="M0 0v7l4-3.500z" fill={INK} />
      </Svg>
    )}
  </button>
);

const Separator = () => <hr className="my-0.5 border-[#e6e6e6]" />;

const ContextMenu: React.FC = () => (
  <div
    role="menu"
    className="absolute left-[133px] top-[655px] w-[171px] rounded-[4px] border border-[#a3a3a3] bg-white py-px font-['DejaVu_Sans_Condensed','DejaVu_Sans',sans-serif] text-[11px] shadow-sm"
  >
    <MenuItem
      icon={
        <Svg>
          <rect x=".5" y=".5" width="15" height="15" stroke={INK} strokeDasharray="2" />
          <path d="M2 6h8v8H2z" fill={BLUE} stroke="#4a93cf" />
          <path d="M3 3.500h6M3.500 2v3M8.500 2v3M12.500 7v6M11 7.500h3M11 12.500h3" stroke={INK} />
        </Svg>
      }
    >
      <u>R</u>epetir Vista base
    </MenuItem>
    <Separator />
    <MenuItem
      icon={
        <Svg w={10} h={8}>
          <path d="M1 4l3 3 5-6" stroke="#1e8fe0" strokeWidth="2" />
        </Svg>
      }
    >
      <u>V</u>isibilidad
    </MenuItem>
    <MenuItem submenu>
      Participación de <u>s</u>ección
    </MenuItem>
    <MenuItem disabled>
      <u>L</u>íneas ocultas
    </MenuItem>
    <MenuItem disabled>
      <u>T</u>ransparente
    </MenuItem>
    <Separator />
    <MenuItem disabled>
      <u>P</u>ropiedades...
    </MenuItem>
    <MenuItem>Seleccionar como ejes</MenuItem>
    <Separator />
    <MenuItem>
      Có<u>m</u>o...
    </MenuItem>
  </div>
);

const Callouts: React.FC = () => (
  <>
    <div className="pointer-events-none absolute left-[120px] top-[676px] h-[29px] w-[195px] border-4 border-[#fa4343] shadow-[1px_3px_4px_rgba(0,0,0,0.45),inset_1px_3px_4px_rgba(0,0,0,0.45)]" />
    <Svg w={50} h={95} className="pointer-events-none absolute left-[14px] top-[658px] drop-shadow-[1px_3px_2px_rgba(0,0,0,0.4)]">
      <path d="M4 84l28-66-4-2L40 6v16l-4-2L8 86z" fill="#fa4343" />
    </Svg>
  </>
);

const App: React.FC = () => (
  <div className="relative flex min-h-screen flex-col overflow-hidden bg-[#f5f5f5] font-['Noto_Sans','Open_Sans',sans-serif] text-[11px]">
    <TitleBar />
    <Tabs />
    <Ribbon />
    <div className="flex flex-1">
      <ModelBrowser />
      <main className="min-w-0 flex-1 overflow-hidden bg-[#ebe9db]">
        <EngineView />
      </main>
    </div>
    <ContextMenu />
    <Callouts />
  </div>
);

export default App;
